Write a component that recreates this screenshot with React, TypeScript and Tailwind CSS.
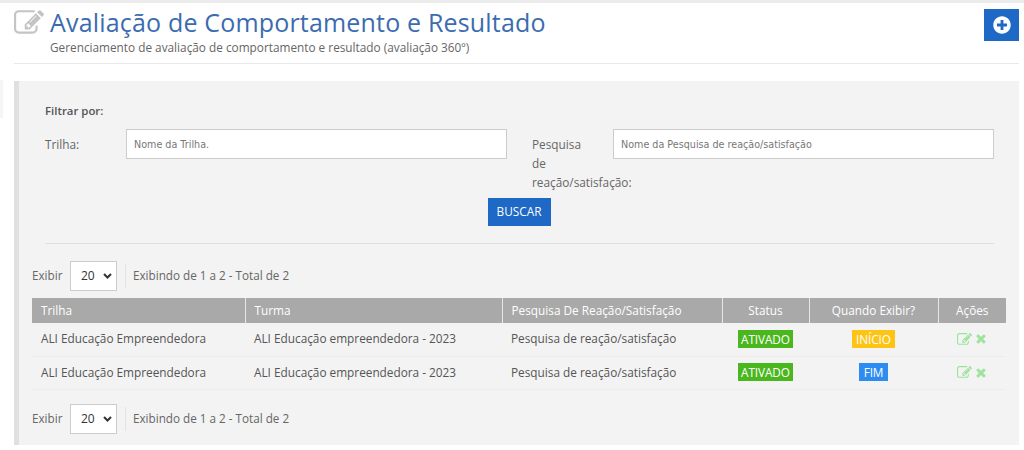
import { FaPlusCircle, FaTimes } from "react-icons/fa";

const EditIcon = ({ size, className }: { size: number; className?: string }) => (
  <svg width={size} height={size} viewBox="0 0 1792 1792" fill="currentColor" className={className}>
    <path d="M888 1184l116-116-152-152-116 116v56h96v96h56zm440-720q-16-16-33 1l-350 350q-17 17-1 33t33-1l350-350q17-17 1-33zm80 594v190q0 119-84.5 203.5t-203.5 84.5h-832q-119 0-203.5-84.5t-84.5-203.5v-832q0-119 84.5-203.5t203.5-84.5h832q63 0 117 25 15 7 18 23 3 17-9 29l-49 49q-14 14-32 8-23-6-45-6h-832q-66 0-113 47t-47 113v832q0 66 47 113t113 47h832q66 0 113-47t47-113v-126q0-13 9-22l64-64q15-15 35-7t20 29zm-96-738l288 288-672 672h-288v-288zm444 132l-92 92-288-288 92-92q28-28 68-28t68 28l152 152q28 28 28 68t-28 68z" />
  </svg>
);

const Pager = () => (
  <div className="flex items-center h-[30px] text-[11.7px] text-[#666]">
    <span className="w-[38px]">Exibir</span>
    <div className="w-[47px] h-[30px] bg-white border border-[#ccc] flex items-center pl-[10px] gap-[8px] text-[12px] text-[#333]">
      <span>20</span>
      <svg width="9" height="6" viewBox="0 0 9 6"><path d="M1 1l3.5 3.5L8 1" fill="none" stroke="#333" strokeWidth="2" /></svg>
    </div>
    <div className="ml-[8px] w-px h-[24px] bg-[#e2e2e2]" />
    <span className="ml-[7px]">Exibindo de 1 a 2 - Total de 2</span>
  </div>
);

const Badge = ({ color, label }: { color: string; label: string }) => (
  <span className={`inline-block h-[18px] leading-[18px] text-white text-[11.8px] tracking-[-0.1px] ${color}`}>{label}</span>
);

const Row = ({ badge }: { badge: React.ReactNode }) => (
  <tr className="h-[33px] border-b border-[#ececec] text-[11.8px] text-[#555]">
    <td className="pl-[9px]">ALI Educação Empreendedora</td>
    <td className="pl-[9px]">ALI Educação empreendedora - 2023</td>
    <td className="pl-[9px]">Pesquisa de reação/satisfação</td>
    <td className="text-center"><Badge color="bg-[#4bb71f] px-[3px]" label="ATIVADO" /></td>
    <td className="text-center">{badge}</td>
    <td>
      <div className="flex justify-center items-center gap-[3px] text-[#9be39a]">
        <EditIcon size={15} />
        <FaTimes size={12} stroke="currentColor" strokeWidth={40} />
      </div>
    </td>
  </tr>
);

const heads: [string, string][] = [
  ["Trilha", "w-[213px] text-left pl-[9px]"],
  ["Turma", "w-[257px] text-left pl-[9px]"],
  ["Pesquisa De Reação/Satisfação", "w-[220px] text-left pl-[9px]"],
  ["Status", "w-[87px] text-center"],
  ["Quando Exibir?", "w-[129px] text-center"],
  ["Ações", "w-[68px] text-center"],
];

export default function App() {
  return (
    <div className="relative w-[1024px] h-[450px] bg-white overflow-hidden font-['Open_Sans',sans-serif]">
      <div className="absolute left-0 top-[80px] w-[3px] h-[38px] bg-[#f5f5f5]" />
      <div className="h-[3px] bg-[#ececec]" />
      <div className="ml-[14px] w-[1005px]">
        <header className="h-[61px] border-b border-[#e8e8e8] flex justify-between">
          <div className="flex">
            <EditIcon size={30} className="text-[#c4c4c4] mt-[5px]" />
            <div className="ml-[6px]">
              <h1 className="text-[25px] leading-[34px] mt-[2px] text-[#3b6cb0] tracking-[0.18px]">Avaliação de Comportamento e Resultado</h1>
              <p className="text-[11.8px] leading-[14px] mt-[1px] text-[#666]">Gerenciamento de avaliação de comportamento e resultado (avaliação 360º)</p>
            </div>
          </div>
          <button className="w-[35px] h-[32px] mt-[6px] bg-[#1e68c6] flex items-center justify-center text-white">
            <FaPlusCircle size={18} />
          </button>
        </header>
        <main className="mt-[17px] h-[364px] bg-[#f3f3f3] border-l-[5px] border-[#e0e0e0] pl-[13px] pr-[13px]">
          <div className="pl-[13px] pr-[12px]">
            <div className="pt-[22px] text-[11.4px] leading-[16px] font-semibold text-[#555]">Filtrar por:</div>
            <div className="mt-[10px] flex text-[11.8px] text-[#666]">
              <label className="w-[81px] leading-[19px] mt-[6px]">Trilha:</label>
              <input placeholder="Nome da Trilha." className="w-[381px] h-[30px] bg-white border border-[#ccc] pl-[7px] text-[9.6px] font-['DejaVu_Sans',sans-serif] placeholder:text-[#777]" />
              <label className="ml-[25px] w-[81px] pr-[20px] leading-[19px] mt-[6px]">Pesquisa de <span className="whitespace-nowrap">reação/satisfação:</span></label>
              <input placeholder="Nome da Pesquisa de reação/satisfação" className="w-[381px] h-[30px] bg-white border border-[#ccc] pl-[7px] text-[9.6px] font-['DejaVu_Sans',sans-serif] placeholder:text-[#777]" />
            </div>
            <div className="flex justify-center mt-[6px] pr-[1px]">
              <button className="w-[63px] h-[28px] bg-[#1e68c6] text-white text-[11.8px]">BUSCAR</button>
            </div>
            <div className="mt-[17px] border-t border-[#dedede]" />
          </div>
          <div className="mt-[17px]"><Pager /></div>
          <table className="mt-[7px] w-[974px] table-fixed border-collapse">
            <thead>
              <tr className="h-[25px] bg-[#a9a9a9] text-white text-[11.8px]">
                {heads.map(([t, c], i) => (
                  <th key={t} className={`font-normal ${c} ${i < 5 ? "border-r border-[#e6e6e6]" : ""}`}>{t}</th>
                ))}
              </tr>
            </thead>
            <tbody>
              <Row badge={<Badge color="bg-[#fdc315] px-[4px]" label="INÍCIO" />} />
              <Row badge={<Badge color="bg-[#2d8cf0] px-[5px]" label="FIM" />} />
            </tbody>
          </table>
          <div className="mt-[14px]"><Pager /></div>
        </main>
      </div>
    </div>
  );
}
